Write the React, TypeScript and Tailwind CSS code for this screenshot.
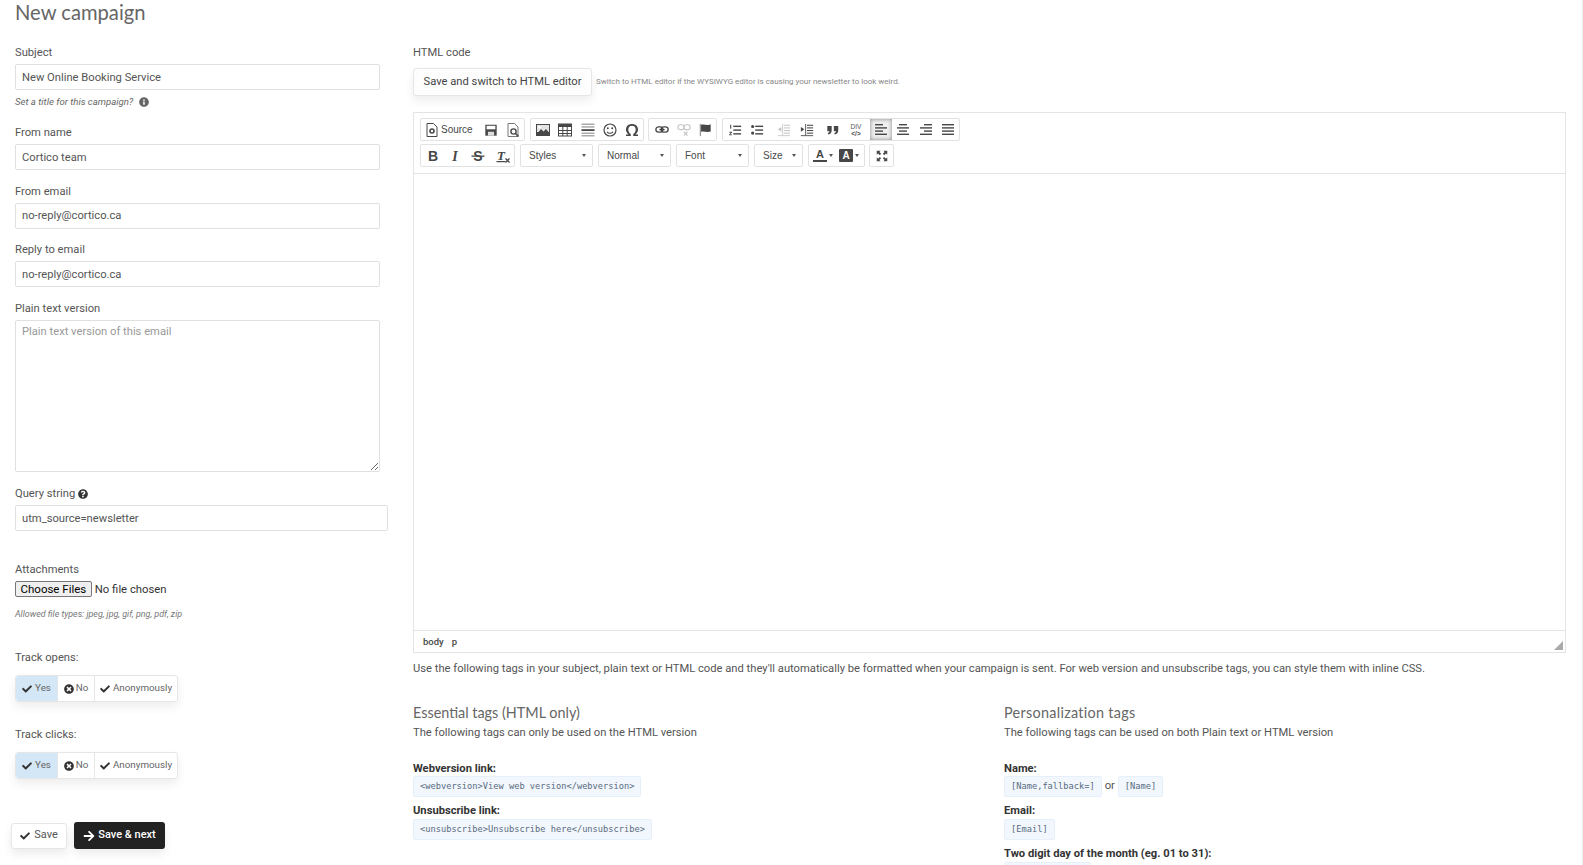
import type { ReactNode } from 'react';
import { FaArrowRight, FaCheck, FaInfoCircle, FaQuestionCircle, FaTimesCircle } from 'react-icons/fa';

const Icon = ({ children, dim, size = 16 }: { children: ReactNode; dim?: boolean; size?: number }) => (
  <svg width={size} height={size} viewBox="0 0 16 16" className={dim ? 'opacity-30' : ''} fill="#474747">
    {children}
  </svg>
);

const Line = ({ y, x = 2, w = 12, h = 1.4 }: { y: number; x?: number; w?: number; h?: number }) => (
  <rect x={x} y={y} width={w} height={h} />
);

const icons: Record<string, ReactNode> = {
  source: (
    <Icon>
      <path d="M3 1.500h6.500L13 5v9.500H3z" fill="none" stroke="#474747" />
      <circle cx="8" cy="9" r="2" fill="none" stroke="#474747" strokeWidth="1.600" />
    </Icon>
  ),
  save: (
    <Icon size={14}>
      <path d="M1.500 2h13v12.500h-13z" />
      <rect x="3" y="3.200" width="10" height="4" fill="#fff" />
      <rect x="4.500" y="10" width="7" height="4.500" fill="#ddd" />
    </Icon>
  ),
  preview: (
    <Icon>
      <path d="M3 1.500h6.500L13 5v9.500H3z" fill="none" stroke="#777" />
      <circle cx="8.500" cy="9.500" r="2.600" fill="#fff" stroke="#474747" strokeWidth="1.400" />
      <path d="M10.500 11.500l3 3" stroke="#474747" strokeWidth="1.600" />
    </Icon>
  ),
  image: (
    <Icon>
      <rect x="1" y="2" width="14" height="12" />
      <rect x="2" y="3" width="12" height="7" fill="#e4e4e4" />
      <circle cx="4.500" cy="5.200" r="1.200" fill="#fff" />
      <path d="M2 12l4-5 2.500 2.500L11 7l3 3.500V13H2z" />
    </Icon>
  ),
  table: (
    <Icon>
      <rect x="1.500" y="2" width="13" height="12" fill="none" stroke="#474747" />
      <rect x="1.500" y="2" width="13" height="3" />
      <path d="M1.500 8.500h13M1.500 11.500h13M5.800 2v12M10.200 2v12" stroke="#474747" fill="none" />
    </Icon>
  ),
  hr: (
    <Icon>
      <rect x="1.500" y="1.500" width="13" height="1.500" fill="#aaa" />
      <rect x="1.500" y="4.200" width="13" height="1.500" fill="#aaa" />
      <rect x="1.500" y="7.200" width="13" height="1.800" />
      <rect x="1.500" y="10.500" width="13" height="1.500" fill="#aaa" />
      <rect x="1.500" y="13" width="13" height="1.500" fill="#aaa" />
    </Icon>
  ),
  smile: (
    <Icon>
      <circle cx="8" cy="8" r="6" fill="none" stroke="#474747" strokeWidth="1.200" />
      <circle cx="5.800" cy="6.300" r="1" />
      <circle cx="10.200" cy="6.300" r="1" />
      <path d="M5 9.800c1.500 2 4.500 2 6 0" fill="none" stroke="#474747" strokeWidth="1.100" />
    </Icon>
  ),
  omega: (
    <Icon>
      <path d="M2 14v-1.600h2.600C3 11.200 2 9.500 2 7.500 2 4.200 4.500 2 8 2s6 2.200 6 5.500c0 2-1 3.700-2.600 4.900H14V14H9.200v-1.800c1.500-.9 2.500-2.600 2.500-4.600 0-2.300-1.400-3.900-3.700-3.900S4.300 5.300 4.300 7.600c0 2 1 3.700 2.500 4.600V14z" />
    </Icon>
  ),
  link: (
    <Icon size={14}>
      <rect x="1" y="4.500" width="8" height="6" rx="3" fill="none" stroke="#474747" strokeWidth="1.500" />
      <rect x="7" y="4.500" width="8" height="6" rx="3" fill="none" stroke="#474747" strokeWidth="1.500" />
      <path d="M5 7.500h6" stroke="#474747" strokeWidth="1.500" />
    </Icon>
  ),
  unlink: (
    <Icon dim size={14}>
      <rect x="1" y="2" width="7" height="5.500" rx="2.500" fill="none" stroke="#474747" strokeWidth="1.300" />
      <rect x="8" y="2" width="7" height="5.500" rx="2.500" fill="none" stroke="#474747" strokeWidth="1.300" />
      <path d="M8 10l4 4.500M12 10l-4 4.500" stroke="#474747" strokeWidth="1.300" />
    </Icon>
  ),
  flag: (
    <Icon size={14}>
      <rect x="2" y="1" width="1.500" height="14" fill="#999" />
      <path d="M3.500 2c3-1.200 6 1 11-.2v8c-5 1.200-8-1-11 .2z" />
    </Icon>
  ),
  ol: (
    <Icon size={14}>
      <Line y={3} x={6} w={9} h={1.600} /><Line y={7.300} x={6} w={9} h={1.600} /><Line y={11.600} x={6} w={9} h={1.600} />
      <rect x="2.500" y="2" width="1.200" height="4.500" />
      <path d="M1.500 10h3v1l-2 2h2v1h-3.200v-1l2-2h-1.800z" />
    </Icon>
  ),
  ul: (
    <Icon size={14}>
      <Line y={3} x={6} w={9} h={1.600} /><Line y={7.300} x={6} w={9} h={1.600} /><Line y={11.600} x={6} w={9} h={1.600} />
      <circle cx="3" cy="4" r="1.800" />
      <circle cx="3" cy="11.500" r="1.800" />
    </Icon>
  ),
  outdent: (
    <Icon dim size={14}>
      <Line y={2} x={8} w={7} h={1.200} /><Line y={5} x={8} w={7} h={1.200} /><Line y={8} x={8} w={7} h={1.200} /><Line y={11} x={8} w={7} h={1.200} />
      <rect x="6" y="1" width="1" height="13" />
      <path d="M1 7.200l4-2.700v5.400z" />
      <Line y={14} x={1} w={14} h={1} />
    </Icon>
  ),
  indent: (
    <Icon size={14}>
      <Line y={2} x={8} w={7} h={1.200} /><Line y={5} x={8} w={7} h={1.200} /><Line y={8} x={8} w={7} h={1.200} /><Line y={11} x={8} w={7} h={1.200} />
      <rect x="6" y="1" width="1" height="13" />
      <path d="M5 7.200L1 4.500v5.400z" />
      <Line y={14} x={1} w={14} h={1} />
    </Icon>
  ),
  quote: (
    <Icon size={14}>
      <path d="M1.500 3.500h5v5c0 2.700-1.500 4-4 4.500l-.5-1.300c1.200-.4 1.900-1.100 2-2.200H1.500z" />
      <path d="M9 3.500h5v5c0 2.700-1.500 4-4 4.500l-.5-1.300c1.200-.4 1.900-1.100 2-2.200H9z" />
    </Icon>
  ),
  div: (
    <Icon>
      <text x="8" y="7" textAnchor="middle" fontSize="6.500" fontFamily="Liberation Sans" fill="#555">DIV</text>
      <text x="8" y="14" textAnchor="middle" fontSize="6.500" fontFamily="Liberation Sans" fontWeight="700" fill="#555">{'</>'}</text>
    </Icon>
  ),
  left: (
    <Icon>
      <Line y={2} w={8} /><Line y={5.200} /><Line y={8.400} w={8} /><Line y={11.600} />
    </Icon>
  ),
  center: (
    <Icon>
      <Line y={2} x={4} w={8} /><Line y={5.200} /><Line y={8.400} x={4} w={8} /><Line y={11.600} />
    </Icon>
  ),
  right: (
    <Icon>
      <Line y={2} x={6} w={8} /><Line y={5.200} /><Line y={8.400} x={6} w={8} /><Line y={11.600} />
    </Icon>
  ),
  justify: (
    <Icon>
      <Line y={2} /><Line y={5.200} /><Line y={8.400} /><Line y={11.600} />
    </Icon>
  ),
  bold: (
    <Icon>
      <text x="8" y="13" textAnchor="middle" fontSize="14" fontFamily="Liberation Sans" fontWeight="700">B</text>
    </Icon>
  ),
  italic: (
    <Icon>
      <text x="8" y="13" textAnchor="middle" fontSize="14" fontFamily="Liberation Serif" fontWeight="700" fontStyle="italic">I</text>
    </Icon>
  ),
  strike: (
    <Icon>
      <text x="8" y="13" textAnchor="middle" fontSize="14" fontFamily="Liberation Sans" fontWeight="700">S</text>
      <rect x="1.500" y="7.500" width="13" height="1.300" />
    </Icon>
  ),
  clear: (
    <Icon>
      <text x="6" y="12" textAnchor="middle" fontSize="13" fontFamily="Liberation Serif" fontWeight="700" fontStyle="italic">T</text>
      <rect x="1.500" y="13" width="9" height="1.200" />
      <path d="M10.500 10.500l4 4M14.500 10.500l-4 4" stroke="#474747" strokeWidth="1.300" />
    </Icon>
  ),
  maximize: (
    <Icon size={14}>
      <path d="M2 2h4.500L5 3.500 7 5.500 5.500 7l-2-2L2 6.500zM14 2v4.500L12.500 5l-2 2L9 5.500l2-2L9.500 2zM2 14V9.500L3.500 11l2-2L7 10.500l-2 2L6.500 14zM14 14H9.500l1.500-1.500-2-2L10.500 9l2 2L14 9.500z" />
    </Icon>
  ),
};

const Tool = ({ name, w = 'w-[22.5px]', active }: { name: string; w?: string; active?: boolean }) => (
  <span
    className={`flex h-[21px] items-center justify-center ${w} ${
      active ? 'bg-[#f0f0f0] shadow-[inset_0_0_4px_rgba(0,0,0,0.45)]' : ''
    }`}
  >
    {icons[name]}
  </span>
);

const Group = ({ children, className = '' }: { children: ReactNode; className?: string }) => (
  <div className={`flex items-center rounded-[2px] border border-[#e2e2e2] bg-white ${className}`}>{children}</div>
);

const Caret = () => <span className="h-0 w-0 border-x-[2.5px] border-t-[3px] border-x-transparent border-t-[#555]" />;

const Combo = ({ label, w }: { label: string; w: string }) => (
  <div className={`flex h-[23px] items-center justify-between rounded-[2px] border border-[#e2e2e2] pl-[8px] pr-[6px] ${w}`}>
    <span className="font-['Liberation_Sans',sans-serif] text-[10px] text-[#484848]">{label}</span>
    <Caret />
  </div>
);

const Field = ({ label, value, wide }: { label: ReactNode; value: string; wide?: boolean }) => (
  <div className="mb-[12.7px]">
    <label className="block h-[18px] leading-[18px]">{label}</label>
    <input
      readOnly
      value={value}
      className={`mt-[2px] block h-[26px] rounded-[2px] border border-[#e0e0e0] px-[6px] text-[11.2px] text-[#555] outline-none ${
        wide ? 'w-[373px]' : 'w-[365px]'
      }`}
    />
  </div>
);

const Toggle = () => (
  <div className="mt-[8px] flex h-[27px] w-[163px] rounded-[3px] border border-[#e6e6e6] text-[9.8px] text-[#666] shadow-[0_5px_10px_rgba(0,0,0,0.07)]">
    <span className="flex w-[41px] items-center justify-center gap-[3px] rounded-l-[3px] bg-[#d3e7f6]">
      <FaCheck className="text-[10px] text-[#333]" /> Yes
    </span>
    <span className="flex w-[37px] items-center justify-center gap-[2px] border-l border-[#e6e6e6]">
      <FaTimesCircle className="text-[10px] text-[#333]" /> No
    </span>
    <span className="flex flex-1 items-center justify-center gap-[3px] border-l border-[#e6e6e6]">
      <FaCheck className="text-[10px] text-[#333]" /> Anonymously
    </span>
  </div>
);

const Tag = ({ children }: { children: string }) => (
  <code className="inline-flex h-[21px] items-center rounded-[2px] border border-[#e6f0fa] bg-[#f1f7fd] px-[6px] font-['DejaVu_Sans_Mono',monospace] text-[8.7px] text-[#5a6b80]">
    {children}
  </code>
);

const TagTitle = ({ children }: { children: string }) => (
  <div className="h-[15px] text-[11.2px] leading-[15px] font-bold text-[#333]">{children}</div>
);

export default function App() {
  return (
    <div className="h-[865px] overflow-hidden border-r border-[#eeeeee] bg-white pl-[15px] font-['Roboto',sans-serif] text-[11.2px] text-[#555]">
      <h1 className="h-[44px] font-['Lato',sans-serif] text-[20.2px] leading-[24px] font-normal text-[#666]">
        New campaign
      </h1>
      <div className="flex">
        <div className="w-[398px] shrink-0">
          <div className="mb-[15px]">
            <label className="block h-[18px] leading-[18px]">Subject</label>
            <input
              readOnly
              value="New Online Booking Service"
              className="mt-[2px] block h-[26px] w-[365px] rounded-[2px] border border-[#e0e0e0] px-[6px] text-[11.2px] text-[#555] outline-none"
            />
            <div className="mt-[5px] flex h-[14px] items-center gap-[6px] text-[9.6px] text-[#666] italic">
              Set a title for this campaign? <FaInfoCircle className="text-[10px] text-[#666]" />
            </div>
          </div>
          <Field label="From name" value="Cortico team" />
          <Field label="From email" value="no-reply@cortico.ca" />
          <Field label="Reply to email" value="no-reply@cortico.ca" />
          <div className="mb-[13px]">
            <label className="block h-[18px] leading-[18px]">Plain text version</label>
            <textarea
              readOnly
              placeholder="Plain text version of this email"
              className="mt-[2px] block h-[152px] w-[365px] rounded-[2px] border border-[#e0e0e0] px-[6px] py-[3px] text-[11.2px] placeholder:text-[#999] outline-none"
            />
          </div>
          <Field
            wide
            value="utm_source=newsletter"
            label={
              <span className="flex items-center gap-[3px]">
                Query string <FaQuestionCircle className="text-[10px] text-[#333]" />
              </span>
            }
          />
          <label className="mt-[30px] block h-[18px] leading-[18px]">Attachments</label>
          <input
            type="file"
            multiple
            className="mt-[2px] block h-[17px] w-[200px] text-[11.3px] leading-[15px] text-[#333] file:mr-[3px] file:h-[16px] file:rounded-[2px] file:border file:border-[#767676] file:bg-[#efefef] file:px-[4.5px] file:text-[11.5px] file:text-black"
          />
          <div className="mt-[9px] h-[14px] text-[8.9px] leading-[14px] text-[#777] italic">
            Allowed file types: jpeg, jpg, gif, png, pdf, zip
          </div>
          <label className="mt-[28px] block h-[18px] leading-[18px]">Track opens:</label>
          <Toggle />
          <label className="mt-[24px] block h-[18px] leading-[18px]">Track clicks:</label>
          <Toggle />
          <div className="mt-[43px] -ml-[4px] flex items-center gap-[7px]">
            <button className="flex h-[26px] w-[56px] items-center justify-center gap-[4px] rounded-[3px] border border-[#e6e6e6] bg-white text-[11px] text-[#555] shadow-[0_5px_10px_rgba(0,0,0,0.08)]">
              <FaCheck className="text-[10px] text-[#333]" /> Save
            </button>
            <button className="flex h-[27px] w-[91px] items-center justify-center gap-[3px] rounded-[3px] bg-[#222] text-[11px] font-medium text-white shadow-[0_5px_10px_rgba(0,0,0,0.08)]">
              <FaArrowRight className="text-[12px]" /> Save &amp; next
            </button>
          </div>
        </div>

        <div className="min-w-0 flex-1 pr-[16px]">
          <label className="block h-[18px] leading-[18px]">HTML code</label>
          <div className="mt-[6px] flex items-center">
            <button className="h-[28px] w-[179px] rounded-[3px] border border-[#e6e6e6] bg-[#fdfdfd] text-[11.2px] text-[#444] shadow-[0_5px_10px_rgba(0,0,0,0.07)]">
              Save and switch to HTML editor
            </button>
            <span className="ml-[4px] text-[8px] text-[#888]">
              Switch to HTML editor if the WYSIWYG editor is causing your newsletter to look weird.
            </span>
          </div>
          <div className="mt-[16px] h-[541px] w-[1153px] border border-[#e4e4e4]">
            <div className="flex h-[61px] flex-col gap-[3px] border-b border-[#e4e4e4] pt-[5px] pl-[6px]">
              <div className="flex gap-[5px]">
                <Group className="h-[23px] w-[105px] pl-[3px]">
                  <Tool name="source" w="w-[16px]" />
                  <span className="ml-[1px] w-[39px] font-['Liberation_Sans',sans-serif] text-[10px] text-[#484848]">Source</span>
                  <Tool name="save" />
                  <Tool name="preview" />
                </Group>
                <Group className="h-[23px] w-[114px] pl-[1px]">
                  <Tool name="image" />
                  <Tool name="table" />
                  <Tool name="hr" />
                  <Tool name="smile" />
                  <Tool name="omega" />
                </Group>
                <Group className="-ml-[1px] h-[23px] w-[69px] pl-[2px]">
                  <Tool name="link" />
                  <Tool name="unlink" />
                  <Tool name="flag" />
                </Group>
                <Group className="h-[23px] w-[238px] pl-[1px]">
                  <Tool name="ol" />
                  <Tool name="ul" />
                  <span className="w-[4.5px]" />
                  <Tool name="outdent" />
                  <Tool name="indent" />
                  <span className="w-[4.5px]" />
                  <Tool name="quote" />
                  <Tool name="div" />
                  <span className="w-[3px]" />
                  <Tool name="left" active />
                  <Tool name="center" />
                  <Tool name="right" />
                  <Tool name="justify" />
                </Group>
              </div>
              <div className="flex gap-[5px]">
                <Group className="h-[23px] w-[95px] pl-[1px]">
                  <Tool name="bold" />
                  <Tool name="italic" />
                  <Tool name="strike" />
                  <span className="w-[3px]" />
                  <Tool name="clear" />
                </Group>
                <Combo label="Styles" w="w-[73px]" />
                <Combo label="Normal" w="w-[73px]" />
                <Combo label="Font" w="w-[73px]" />
                <Combo label="Size" w="w-[49px]" />
                <Group className="h-[23px] w-[57px] gap-[2px] pl-[4px]">
                  <span className="flex w-[14px] flex-col items-center font-['Liberation_Sans',sans-serif] text-[11px] leading-[11px] font-bold text-[#474747]">
                    A<span className="h-[1.5px] w-[14px] bg-[#474747]" />
                  </span>
                  <Caret />
                  <span className="ml-[4px] flex h-[13px] w-[14px] items-center justify-center rounded-[1px] bg-[#474747] font-['Liberation_Sans',sans-serif] text-[10px] font-bold text-white">
                    A
                  </span>
                  <Caret />
                </Group>
                <Group className="-ml-[1px] h-[23px] w-[25px] justify-center">
                  {icons.maximize}
                </Group>
              </div>
            </div>
            <div className="h-[456px]" />
            <div className="relative flex h-[22px] items-center gap-[8px] border-t border-[#e4e4e4] pl-[9px] pt-[1px] text-[9.5px] font-medium text-[#484848]">
              <span>body</span>
              <span>p</span>
              <svg width="9" height="9" viewBox="0 0 8 8" className="absolute right-[2px] bottom-[2px]" fill="#aaa">
                <path d="M8 0v8H0z" />
              </svg>
            </div>
          </div>
          <p className="mt-[7px] h-[18px] leading-[18px] text-[#555]">
            Use the following tags in your subject, plain text or HTML code and they'll automatically be formatted when your campaign is sent. For web version and unsubscribe tags, you can style them with inline CSS.
          </p>
          <div className="mt-[25px] flex">
            <div className="w-[591px] shrink-0">
              <h3 className="h-[20px] font-['Lato',sans-serif] text-[14.4px] leading-[20px] font-normal text-[#666]">Essential tags (HTML only)</h3>
              <p className="mt-[1px] h-[18px] leading-[18px]">The following tags can only be used on the HTML version</p>
              <div className="mt-[19px]">
                <TagTitle>Webversion link:</TagTitle>
                <Tag>{'<webversion>View web version</webversion>'}</Tag>
                <div className="mt-[5.5px] h-[16.5px]"><TagTitle>Unsubscribe link:</TagTitle></div>
                <Tag>{'<unsubscribe>Unsubscribe here</unsubscribe>'}</Tag>
              </div>
            </div>
            <div className="flex-1">
              <h3 className="h-[20px] font-['Lato',sans-serif] text-[14.4px] leading-[20px] font-normal tracking-[0.3px] text-[#666]">Personalization tags</h3>
              <p className="mt-[1px] h-[18px] leading-[18px]">The following tags can be used on both Plain text or HTML version</p>
              <div className="mt-[19px]">
                <TagTitle>Name:</TagTitle>
                <div className="flex items-center">
                  <Tag>{'[Name,fallback=]'}</Tag>
                  <span className="mx-[3px] text-[11.2px]">or</span>
                  <Tag>{'[Name]'}</Tag>
                </div>
                <div className="mt-[5.5px] h-[16.5px]"><TagTitle>Email:</TagTitle></div>
                <Tag>{'[Email]'}</Tag>
                <div className="mt-[5.5px] h-[16.5px]"><TagTitle>Two digit day of the month (eg. 01 to 31):</TagTitle></div>
                <Tag>{'[currentdaylz]'}</Tag>
              </div>
            </div>
          </div>
        </div>
      </div>
    </div>
  );
}
